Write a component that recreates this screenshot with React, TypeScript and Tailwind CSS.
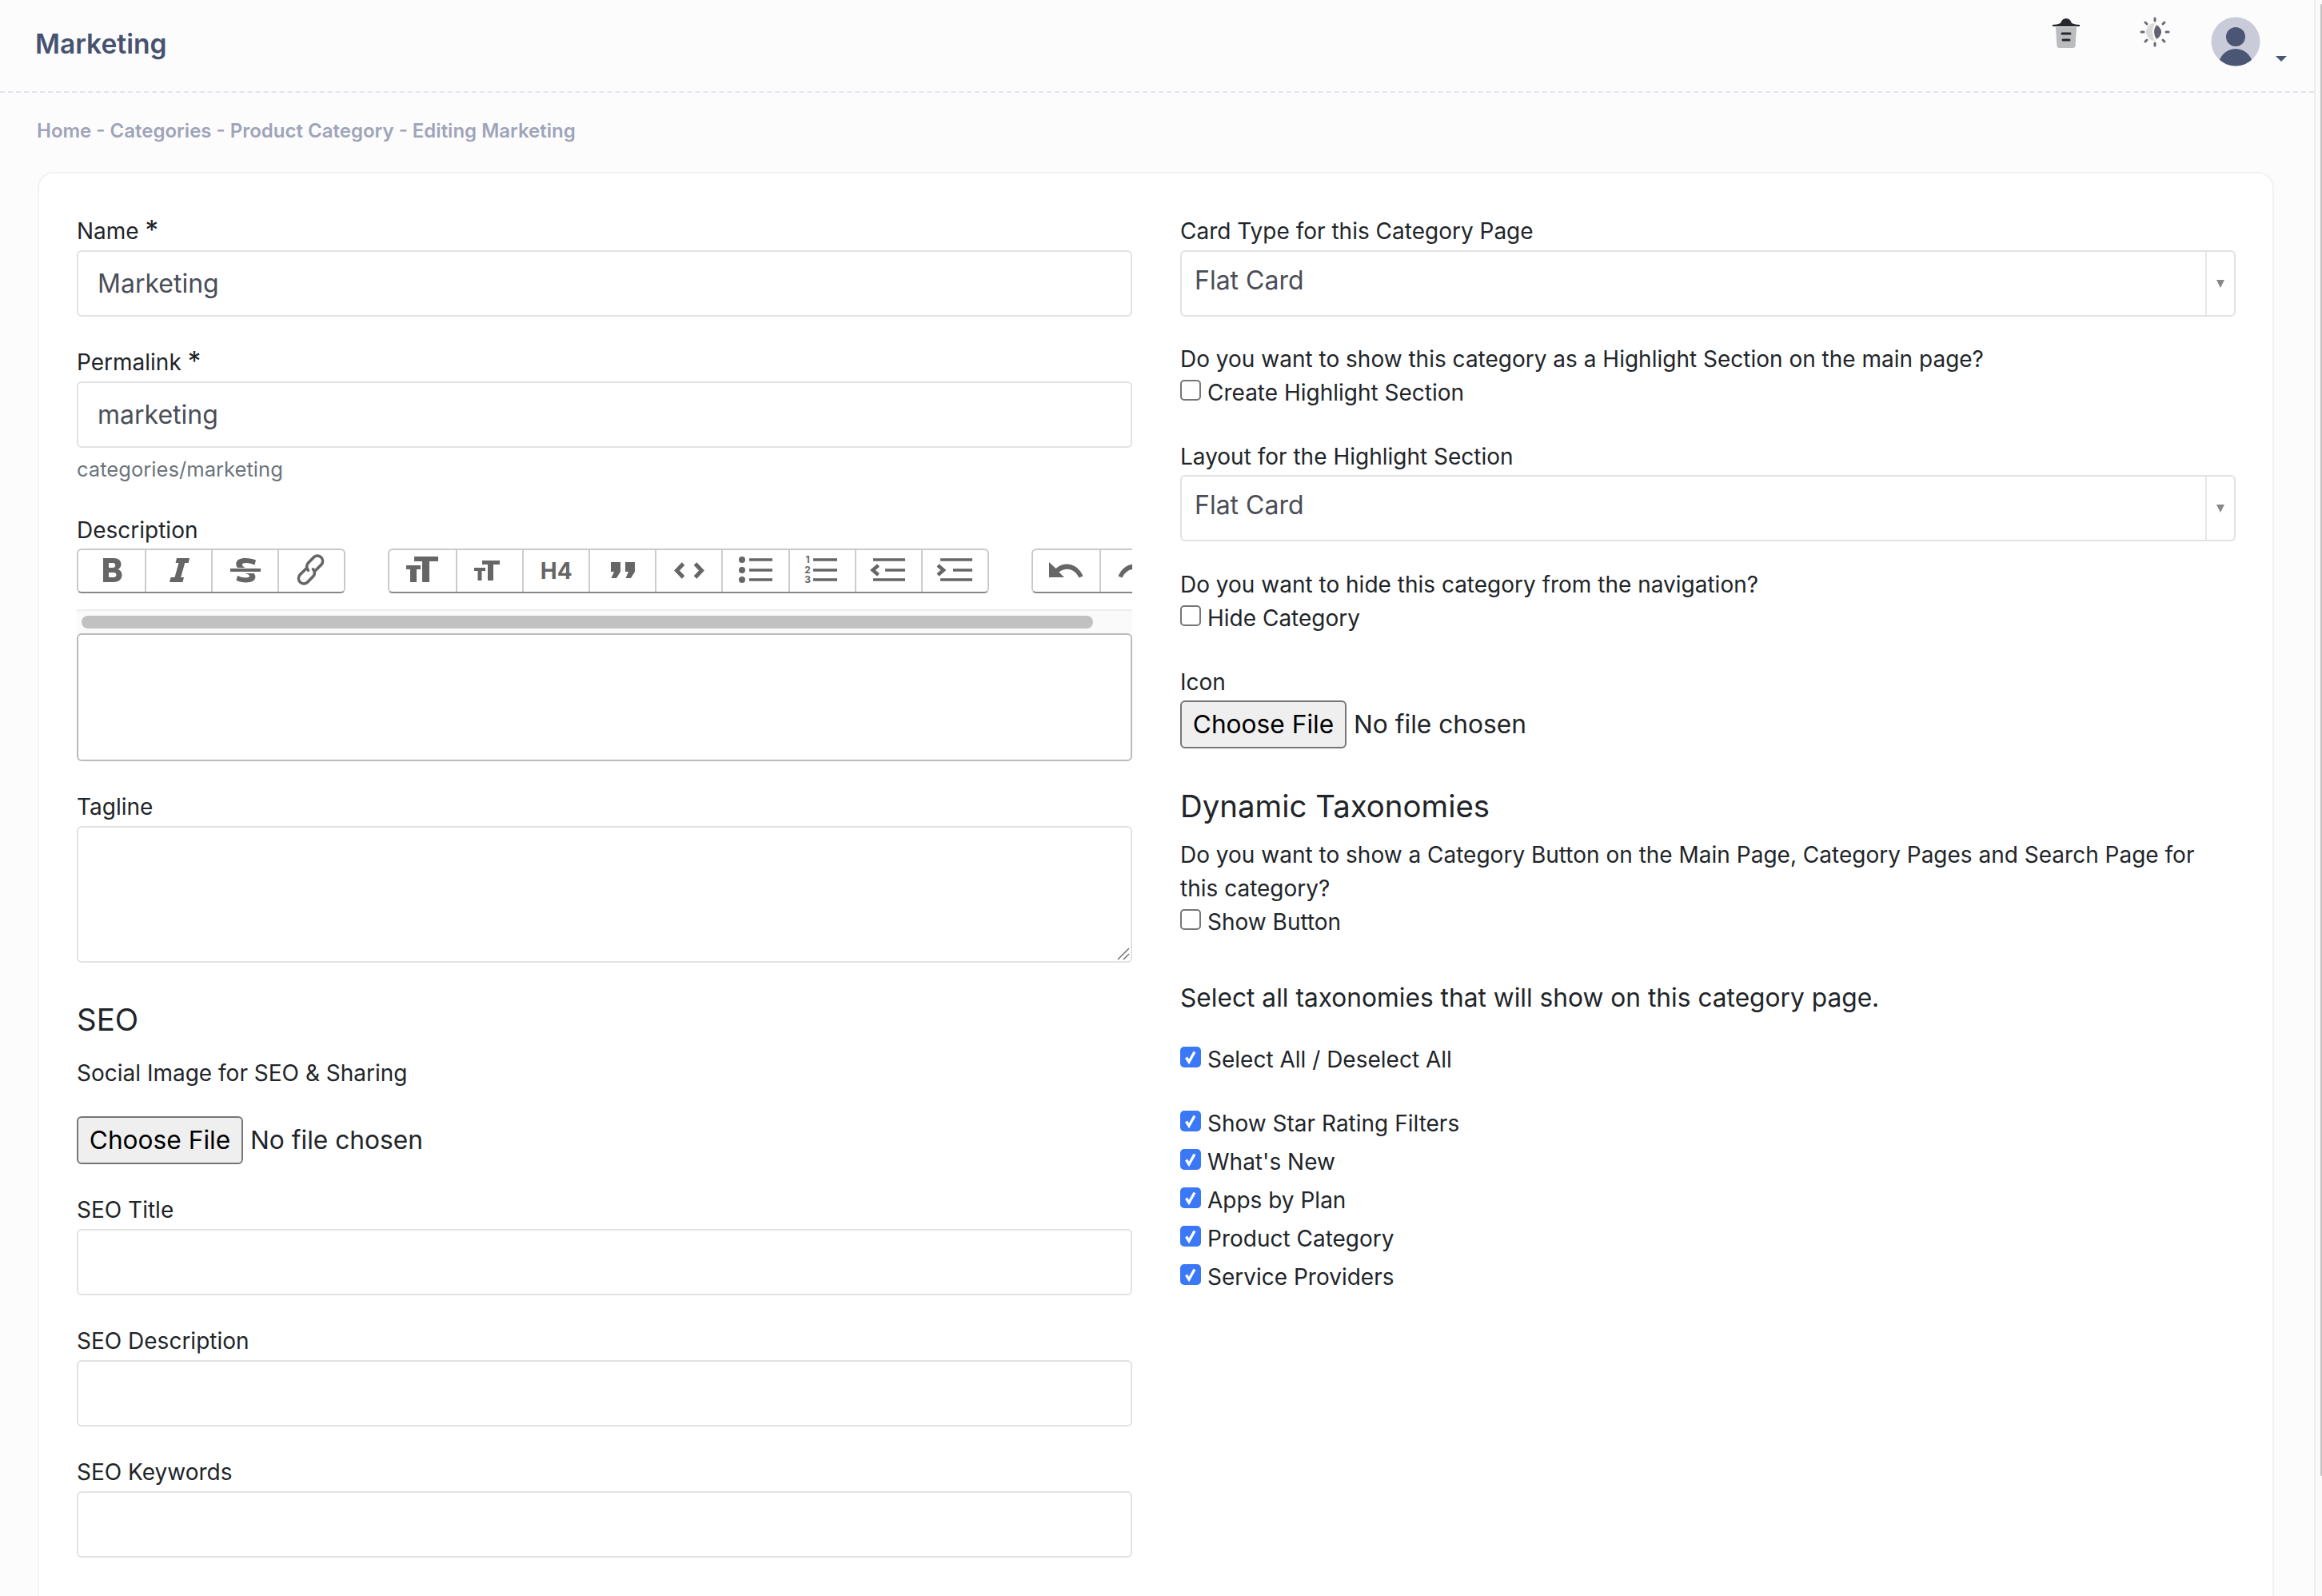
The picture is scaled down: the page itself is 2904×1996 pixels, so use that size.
import React from 'react';

const ICON = '#666666';

const Svg = ({ children }: { children: React.ReactNode }) => (
  <svg viewBox="0 0 84 54" className="w-[84px] h-[52px] shrink-0" preserveAspectRatio="xMinYMin slice" fill={ICON}>
    {children}
  </svg>
);

const lines = (x1: number, x2: number, mid = x1) => (
  <g stroke={ICON} strokeWidth="3.6" fill="none">
    <path d={`M${x1} 12H${x2}`} />
    <path d={`M${mid} 25H${x2}`} />
    <path d={`M${x1} 37H${x2}`} />
  </g>
);

const undoPath = 'M20 15V34H39L32.5 27.5C41 21 52 23 57.5 34.5L62.5 32.5C56 17 40 13 28.5 23z';

const toolbarGroups: React.ReactNode[][] = [
  [
    <Svg key="bold">
      <path
        fillRule="evenodd"
        d="M31 10H44C50 10 53.5 13 53.5 17.5C53.5 20.5 52 22.8 49.5 24C52.5 25 54.5 27.5 54.5 31C54.5 36.5 50.5 40 44.5 40H31zM38 16V22H43C45 22 46.3 20.9 46.3 19S45 16 43 16zM38 28V34H44C46.2 34 47.5 32.9 47.5 31S46.2 28 44 28z"
      />
    </Svg>,
    <Svg key="italic">
      <path d="M38 10H54L52.8 16H48.2L43.2 34H47L45.5 40H29L30.5 34H35.5L40.5 16H36.6z" />
    </Svg>,
    <Svg key="strike">
      <path d="M22 23H60V27H22z" />
      <path d="M31 22C29.8 20.5 29.3 19 29.3 17.2C29.3 12.5 34 10 41 10C46 10 50.5 11 54 12.6L52.5 18.5C49 17 45.5 16 41.8 16C38.5 16 37 16.8 37 18.2C37 20 38.5 20.8 41 22z" />
      <path d="M40 29H51.5C52.8 30.5 53.4 32 53.4 33.8C53.4 38 48.5 40.5 42 40.5C37 40.5 33 39.5 29.5 37.8L31 32C34.5 33.7 38 34.5 41.5 34.5C44.5 34.5 46 33.8 46 32.6C46 31 44 30 40 29z" />
    </Svg>,
    <Svg key="link">
      <g fill="none" stroke={ICON} strokeWidth="3.6" strokeLinecap="round">
        <path d="M45 26L53 18A6.6 6.6 0 0 0 43.7 8.7L36.5 15.9A6.6 6.6 0 0 0 36.5 25.2" />
        <path d="M34 23L26 31A6.6 6.6 0 0 0 35.3 40.3L42.5 33.1A6.6 6.6 0 0 0 42.5 23.8" />
      </g>
    </Svg>,
  ],
  [
    <Svg key="heading">
      <path d="M31 8H61V14H50V40H41V14H31z" />
      <path d="M21 19H39V24H34V40H26V24H21z" />
    </Svg>,
    <Svg key="subheading">
      <path d="M31 13H53V18H45V38H38V18H31z" />
      <path d="M21 22H35V26H30.5V38H25.5V26H21z" />
    </Svg>,
    <span key="h4" className="w-[82px] h-[52px] shrink-0 flex items-center justify-center text-[28px] leading-none font-bold text-[#666666]">
      H4
    </span>,
    <Svg key="quote">
      <path d="M26 15H38V27L33 35H26.5L30 27H26z" />
      <path d="M44 15H56V27L51 35H44.5L48 27H44z" />
    </Svg>,
    <Svg key="code">
      <g fill="none" stroke={ICON} strokeWidth="5">
        <path d="M33.5 17L25.5 25.5L33.5 34" />
        <path d="M48.5 17L56.5 25.5L48.5 34" />
      </g>
    </Svg>,
    <Svg key="bullets">
      <circle cx="24" cy="12" r="4" />
      <circle cx="24" cy="25" r="4" />
      <circle cx="24" cy="37" r="4" />
      {lines(33, 62)}
    </Svg>,
    <Svg key="numbers">
      <text x="22" y="16" textAnchor="middle" fontSize="12" fontWeight="700">1</text>
      <text x="22" y="29" textAnchor="middle" fontSize="12" fontWeight="700">2</text>
      <text x="22" y="41" textAnchor="middle" fontSize="12" fontWeight="700">3</text>
      {lines(29, 59)}
    </Svg>,
    <Svg key="outdent">
      {lines(21, 61, 36)}
      <path d="M27.5 19L20.5 25L27.5 31" fill="none" stroke={ICON} strokeWidth="4.4" />
    </Svg>,
    <Svg key="indent">
      {lines(22, 62, 38)}
      <path d="M19 19L26 25L19 31" fill="none" stroke={ICON} strokeWidth="4.4" />
    </Svg>,
  ],
  [
    <Svg key="undo">
      <path d={undoPath} />
    </Svg>,
    <Svg key="redo">
      <path d={undoPath} transform="matrix(-1 0 0 1 84 0)" />
    </Svg>,
  ],
];

const Label = ({ children, className = '' }: { children: React.ReactNode; className?: string }) => (
  <div className={`h-[42px] text-[28px] leading-[42px] text-[#212529] ${className}`}>{children}</div>
);

const Required = () => <span className="text-[33px] leading-none">*</span>;

const TextInput = ({ value }: { value?: string }) => (
  <input
    readOnly
    value={value ?? ''}
    className="block w-full h-[83px] mt-[3px] px-[24px] bg-white border-2 border-[#e1e2e5] rounded-[6px] text-[32px] text-[#4a4e57] outline-none"
  />
);

const Field = ({ label, value, className = '' }: { label: React.ReactNode; value?: string; className?: string }) => (
  <div className={className}>
    <Label>{label}</Label>
    <TextInput value={value} />
  </div>
);

const SelectBox = ({ className = '' }: { className?: string }) => (
  <div className={`flex h-[83px] bg-white border-2 border-[#e1e2e5] rounded-[6px] ${className}`}>
    <div className="flex-1 pl-[16px] pt-[12px] text-[32px] leading-[48px] text-[#4a4e57]">Flat Card</div>
    <div className="w-[36px] border-l-2 border-[#e6e7e9] flex items-center justify-center">
      <div className="w-0 h-0 border-x-[5px] border-x-transparent border-t-[10px] border-t-[#888888]" />
    </div>
  </div>
);

const Check = ({ label, checked = false, className = '' }: { label: string; checked?: boolean; className?: string }) => (
  <label className={`flex h-[42px] text-[28px] leading-[42px] text-[#212529] ${className}`}>
    <span className="relative w-[26px] h-[26px] mt-[5px] mr-[8px] shrink-0">
      <input
        type="checkbox"
        readOnly
        checked={checked}
        className="block appearance-none w-[26px] h-[26px] rounded-[5px] bg-white border-2 border-[#767676] checked:bg-[#3b78f5] checked:border-[#3b78f5]"
      />
      {checked && (
        <svg viewBox="0 0 26 26" className="absolute inset-0 w-[26px] h-[26px]" fill="none" stroke="#ffffff" strokeWidth="3.4">
          <path d="M7.5 13.5L11 19L18 6.5" />
        </svg>
      )}
    </span>
    {label}
  </label>
);

const FileInput = ({ className = '' }: { className?: string }) => (
  <input
    type="file"
    className={`block w-full h-[60px] text-[31.7px] leading-[56px] text-[#212529] file:h-[60px] file:w-[208px] file:pb-[5px] file:mr-[9px] file:bg-[#efefef] file:border-2 file:border-solid file:border-[#767676] file:rounded-[6px] file:text-[31.7px] file:text-black file:font-normal ${className}`}
  />
);

export default function App() {
  return (
    <div className="flex h-[1996px] overflow-hidden bg-[#fcfcfd] font-['Inter',sans-serif]">
      <div className="w-[2894px] shrink-0">
        {/* Header */}
        <header className="relative h-[116px] border-b-2 border-dashed border-[#e4e4ee] pl-[44px] pt-[31px]">
          <h1 className="text-[33.6px] leading-[48px] font-semibold text-[#475271]">Marketing</h1>
          <div className="absolute top-0 right-0 h-full">
            <svg viewBox="0 0 34 38" className="absolute top-[23px] right-[293px] w-[34px] h-[38px]">
              <path d="M4 11H30L28.6 34Q28.4 37 25.5 37H8.5Q5.6 37 5.4 34z" fill="#bbbcbe" />
              <path d="M0 8Q6 8 10 6Q12 0 17 0Q22 0 24 6Q28 8 34 8V10H0z" fill="#26282e" />
              <path d="M12 19H22M13 27H21" stroke="#26282e" strokeWidth="3" strokeLinecap="round" />
            </svg>
            <svg viewBox="0 0 38 38" className="absolute top-[21px] right-[180px] w-[38px] h-[38px]">
              <g stroke="#6b6878" strokeWidth="3" strokeLinecap="round">
                <path d="M19 2V5M19 33V36M2 19H5M33 19H36M7 7L9 9M31 7L29 9M7 31L9 29M31 31L29 29" />
              </g>
              <path d="M19 8A11 11 0 0 0 19 30Q13 19 19 8z" fill="#d9d9dc" />
              <path d="M21 10Q15 19 21 28Q27 24 27 19Q27 14 21 10z" fill="#64606f" />
            </svg>
            <svg viewBox="0 0 62 62" className="absolute top-[21px] right-[67px] w-[62px] h-[62px]">
              <defs>
                <clipPath id="avatar-clip">
                  <circle cx="31" cy="31" r="30.5" />
                </clipPath>
              </defs>
              <circle cx="31" cy="31" r="30.5" fill="#c9ccd8" />
              <g clipPath="url(#avatar-clip)" fill="#4b5675">
                <circle cx="31" cy="25" r="12" />
                <ellipse cx="31" cy="63" rx="22" ry="23" />
              </g>
            </svg>
            <div className="absolute top-[70px] right-[34px] w-0 h-0 border-x-[7px] border-x-transparent border-t-[7px] border-t-[#4b5675]" />
          </div>
        </header>

        {/* Breadcrumb */}
        <div className="pl-[46px] pt-[30px] h-[99px] text-[24px] leading-[36px] font-semibold text-[#9fa4b9]">
          Home - Categories - Product Category - Editing Marketing
        </div>

        {/* Card */}
        <div className="mx-[47px] w-[2797px] h-[1900px] bg-white border-2 border-[#f2f2f4] rounded-[20px] pt-[51px] px-[47px]">
          <div className="grid grid-cols-[1320px_1320px] gap-x-[60px]">
            {/* Left column */}
            <div>
              <Field label={<>Name <Required /></>} value="Marketing" />
              <Field label={<>Permalink <Required /></>} value="marketing" className="mt-[36px]" />
              <div className="mt-[6px] h-[42px] text-[25.6px] leading-[42px] text-[#6c757d]">categories/marketing</div>

              <Label className="mt-[34px]">Description</Label>
              <div className="mt-[2px] w-[1320px] overflow-hidden">
                <div className="flex w-[1500px] h-[56px]">
                  {toolbarGroups.map((group, i) => (
                    <div
                      key={i}
                      className={`flex shrink-0 h-[56px] bg-white border-2 border-[#c9c9c9] border-b-[#888888] rounded-[6px] overflow-hidden ${
                        i > 0 ? 'ml-[53px]' : ''
                      }`}
                    >
                      {group.map((btn, j) => (
                        <div
                          key={j}
                          className={`flex h-[52px] overflow-hidden ${j > 0 ? 'w-[83.2px] border-l-2 border-[#cccccc]' : 'w-[82.5px]'}`}
                        >
                          {btn}
                        </div>
                      ))}
                    </div>
                  ))}
                </div>
                <div className="mt-[20px] h-[30px] border-t-2 border-[#eeeeee] bg-[#fafafa] pt-[6px] pl-[6px]">
                  <div className="w-[1265px] h-[16px] rounded-full bg-[#c1c1c1]" />
                </div>
              </div>
              <div className="h-[160px] bg-white border-2 border-[#bbbbbb] rounded-[6px]" />

              <Label className="mt-[36px]">Tagline</Label>
              <div className="relative mt-[3px]">
                <textarea
                  readOnly
                  className="block w-full h-[171px] bg-white border-2 border-[#e1e2e5] rounded-[6px] outline-none resize-none"
                />
                <svg viewBox="0 0 16 16" className="absolute right-[3px] bottom-[3px] w-[16px] h-[16px]" fill="none" stroke="#777777" strokeWidth="1.6">
                  <path d="M1 15L15 1M8 15L15 8" />
                </svg>
              </div>

              <h2 className="mt-[47px] h-[48px] text-[38.4px] leading-[48px] text-[#212529]">SEO</h2>
              <Label className="mt-[22px]">Social Image for SEO &amp; Sharing</Label>
              <FileInput className="mt-[33px]" />

              <Field label="SEO Title" className="mt-[36px]" />
              <Field label="SEO Description" className="mt-[36px]" />
              <Field label="SEO Keywords" className="mt-[36px]" />
            </div>

            {/* Right column */}
            <div>
              <Label>Card Type for this Category Page</Label>
              <SelectBox className="mt-[3px]" />

              <Label className="mt-[32px]">Do you want to show this category as a Highlight Section on the main page?</Label>
              <Check label="Create Highlight Section" />

              <Label className="mt-[38px]">Layout for the Highlight Section</Label>
              <SelectBox className="mt-[2px]" />

              <Label className="mt-[33px]">Do you want to hide this category from the navigation?</Label>
              <Check label="Hide Category" />

              <Label className="mt-[38px]">Icon</Label>
              <FileInput className="mt-[2px]" />

              <h2 className="mt-[48px] h-[48px] text-[38.4px] leading-[48px] text-[#212529]">Dynamic Taxonomies</h2>
              <p className="mt-[16px] text-[28px] leading-[42px] text-[#212529]">
                Do you want to show a Category Button on the Main Page, Category Pages and Search Page for this category?
              </p>
              <Check label="Show Button" />

              <div className="mt-[50px] h-[48px] text-[31.7px] leading-[48px] text-[#212529]">
                Select all taxonomies that will show on this category page.
              </div>
              <Check label="Select All / Deselect All" checked className="mt-[32px]" />
              <div className="mt-[38px] flex flex-col gap-[6px]">
                <Check label="Show Star Rating Filters" checked />
                <Check label="What's New" checked />
                <Check label="Apps by Plan" checked />
                <Check label="Product Category" checked />
                <Check label="Service Providers" checked />
              </div>
            </div>
          </div>
        </div>
      </div>

      {/* Page scrollbar */}
      <div className="flex-1 border-l-2 border-[#ededed] bg-[#fafafa] pt-[5px] flex justify-end">
        <div className="w-[2px] h-[1841px] bg-[#c1c1c1] rounded-l-full" />
      </div>
    </div>
  );
}
